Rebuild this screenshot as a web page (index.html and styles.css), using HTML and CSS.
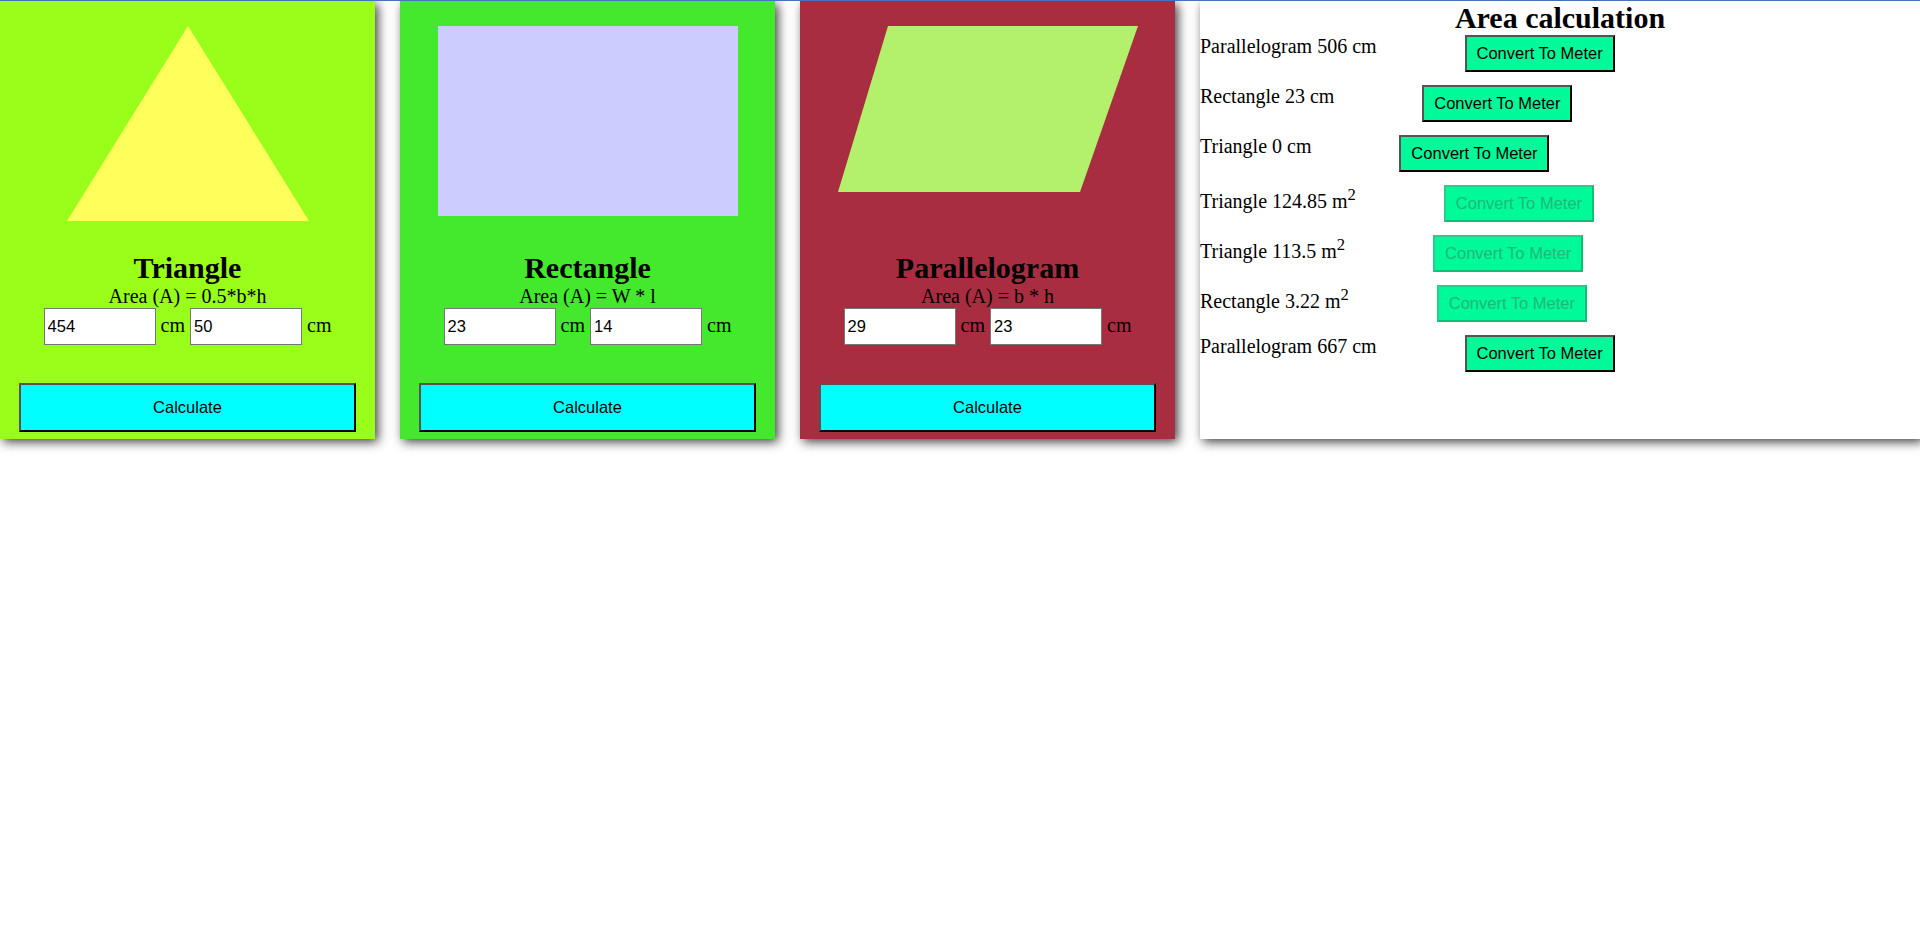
FILE: index.html
```html
<!DOCTYPE html>
<html lang="en">
<head>
<meta charset="utf-8">
<title>Area calculation</title>
<link rel="stylesheet" href="styles.css">
</head>
<body>
<main class="board">
  <section class="card card-tri">
    <div class="shape"><div class="triangle"></div></div>
    <h2 class="title">Triangle</h2>
    <p class="formula">Area (A) = 0.5*b*h</p>
    <div class="inputs"><input class="field" type="text" value="454"> cm <input class="field" type="text" value="50"> cm</div>
    <button class="calc" type="button">Calculate</button>
  </section>
  <section class="card card-rect">
    <div class="shape"><div class="rectangle"></div></div>
    <h2 class="title">Rectangle</h2>
    <p class="formula">Area (A) = W * l</p>
    <div class="inputs"><input class="field" type="text" value="23"> cm <input class="field" type="text" value="14"> cm</div>
    <button class="calc" type="button">Calculate</button>
  </section>
  <section class="card card-para">
    <div class="shape">
      <svg class="parallelogram" width="300" height="166" viewBox="0 0 300 166"><polygon points="50,0 300,0 242,166 0,166"/></svg>
    </div>
    <h2 class="title">Parallelogram</h2>
    <p class="formula">Area (A) = b * h</p>
    <div class="inputs"><input class="field" type="text" value="29"> cm <input class="field" type="text" value="23"> cm</div>
    <button class="calc" type="button">Calculate</button>
  </section>
  <section class="results">
    <h2 class="results-title">Area calculation</h2>
    <div class="row"><span class="label">Parallelogram 506 cm</span><button class="convert" type="button">Convert To Meter</button></div>
    <div class="row"><span class="label">Rectangle 23 cm</span><button class="convert" type="button">Convert To Meter</button></div>
    <div class="row"><span class="label">Triangle 0 cm</span><button class="convert" type="button">Convert To Meter</button></div>
    <div class="row"><span class="label">Triangle 124.85 m<sup>2</sup></span><button class="convert" type="button" disabled>Convert To Meter</button></div>
    <div class="row"><span class="label">Triangle 113.5 m<sup>2</sup></span><button class="convert" type="button" disabled>Convert To Meter</button></div>
    <div class="row"><span class="label">Rectangle 3.22 m<sup>2</sup></span><button class="convert" type="button" disabled>Convert To Meter</button></div>
    <div class="row"><span class="label">Parallelogram 667 cm</span><button class="convert" type="button">Convert To Meter</button></div>
  </section>
</main>
</body>
</html>
```

FILE: styles.css
```css
html, body {
  margin: 0;
  padding: 0;
  background: #ffffff;
}

body {
  border-top: 1px solid #4473bd;
  font-family: "Liberation Serif", "Times New Roman", serif;
  font-size: 20px;
  color: #000;
  padding-bottom: 20px;
}

.board {
  display: flex;
  align-items: stretch;
  gap: 25px;
}

.card {
  width: 375px;
  flex: 0 0 375px;
  display: flex;
  flex-direction: column;
  align-items: center;
  padding: 25px 0 6.5px;
  box-shadow: 3px 3px 10px rgba(0, 0, 0, 0.75);
}

.card-tri { background: #99ff1a; }
.card-rect { background: #44e92e; }
.card-para { background: #a92d40; }

.shape {
  width: 100%;
  height: 190px;
  display: flex;
  justify-content: center;
  align-items: flex-start;
}

.triangle {
  width: 0;
  height: 0;
  border-left: 121px solid transparent;
  border-right: 121px solid transparent;
  border-bottom: 195px solid #ffff5c;
}

.rectangle {
  width: 300px;
  height: 190px;
  background: #ccccff;
}

.parallelogram {
  display: block;
  fill: #b3f06c;
}

.title {
  margin: 35px 0 0;
  font-size: 30px;
  font-weight: bold;
  line-height: normal;
}

.formula {
  margin: 0;
  font-size: 20px;
  line-height: normal;
}

.inputs {
  height: 37px;
  white-space: nowrap;
  text-align: center;
}

.field {
  box-sizing: border-box;
  width: 112px;
  height: 37px;
  margin: 0;
  padding: 0 3px;
  border: 1px solid #767676;
  border-radius: 0;
  background: #fff;
  font-family: "Liberation Sans", Arial, sans-serif;
  font-size: 16.5px;
  color: #000;
  vertical-align: baseline;
}

.calc {
  box-sizing: border-box;
  width: 337px;
  height: 49px;
  margin-top: 38px;
  padding: 0;
  background: #00ffff;
  border: 2px solid;
  border-color: #545454 #000 #000 #545454;
  font-family: "Liberation Sans", Arial, sans-serif;
  font-size: 16.5px;
  color: #000;
}

.results {
  flex: 1 1 auto;
  background: #fff;
  box-shadow: 3px 3px 10px rgba(0, 0, 0, 0.75);
}

.results-title {
  margin: 0;
  text-align: center;
  font-size: 30px;
  font-weight: bold;
  line-height: normal;
}

.row {
  display: flex;
  align-items: flex-start;
  margin-bottom: 13px;
}

.label {
  font-size: 20px;
  line-height: normal;
  white-space: nowrap;
}

.convert {
  box-sizing: border-box;
  width: 150px;
  height: 37px;
  margin-left: 88px;
  padding: 0;
  background: #00fa9a;
  border: 2px solid;
  border-color: #545454 #000 #000 #545454;
  font-family: "Liberation Sans", Arial, sans-serif;
  font-size: 16.5px;
  color: #000;
}

.convert:disabled {
  border-color: #22d18e #13bd76 #13bd76 #22d18e;
  color: #1fb878;
}
```
